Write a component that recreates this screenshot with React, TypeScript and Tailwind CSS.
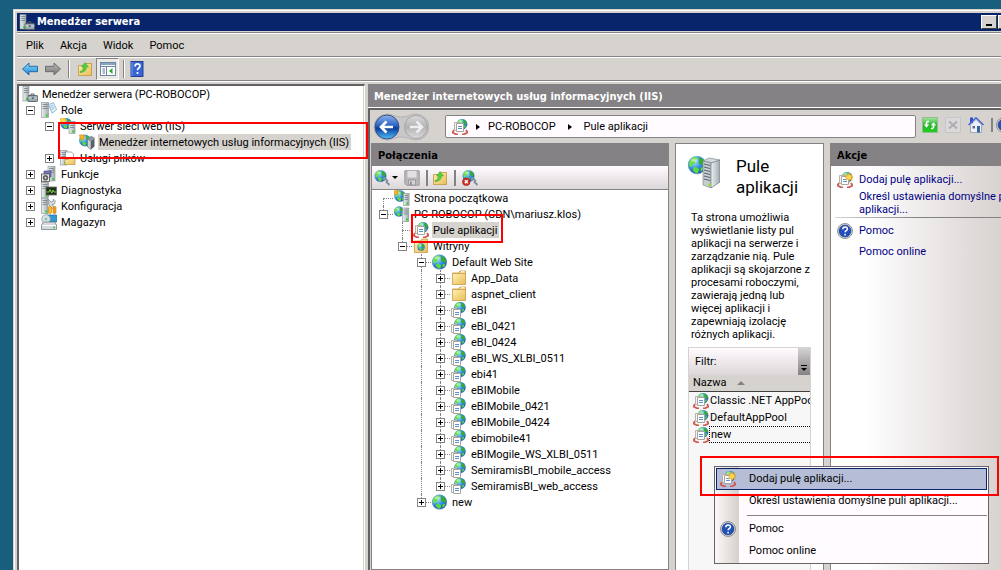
import type { ReactNode } from "react";
import clsx from "clsx";

/* ── Icon primitives (16x16 grid) ── */

function Svg({ children, className = "size-4" }: { children: ReactNode; className?: string }) {
  return (
    <svg viewBox="0 0 16 16" className={clsx("block shrink-0", className)} aria-hidden="true">
      {children}
    </svg>
  );
}

function Defs() {
  return (
    <svg className="absolute size-0" aria-hidden="true">
      <defs>
        <radialGradient id="sea" cx="0.35" cy="0.3" r="0.8">
          <stop offset="0" stopColor="#b4e8fb" />
          <stop offset="0.45" stopColor="#3d97e6" />
          <stop offset="1" stopColor="#1748a4" />
        </radialGradient>
        <linearGradient id="metal" x1="0" x2="1" y1="0" y2="0">
          <stop offset="0" stopColor="#eef1f2" />
          <stop offset="1" stopColor="#a2abb0" />
        </linearGradient>
        <linearGradient id="folder" x1="0" x2="1" y1="0" y2="1">
          <stop offset="0" stopColor="#fff0b4" />
          <stop offset="1" stopColor="#e8bd58" />
        </linearGradient>
        <linearGradient id="blueArrow" x1="0" x2="0" y1="0" y2="1">
          <stop offset="0" stopColor="#8fdcfa" />
          <stop offset="1" stopColor="#1c86d4" />
        </linearGradient>
        <linearGradient id="grayArrow" x1="0" x2="0" y1="0" y2="1">
          <stop offset="0" stopColor="#b8b8b8" />
          <stop offset="1" stopColor="#777777" />
        </linearGradient>
        <linearGradient id="blueBall" x1="0" x2="0" y1="0" y2="1">
          <stop offset="0" stopColor="#8cb4ee" />
          <stop offset="0.45" stopColor="#2a60c0" />
          <stop offset="0.55" stopColor="#0c3c9c" />
          <stop offset="1" stopColor="#4fc0fa" />
        </linearGradient>
        <linearGradient id="grayBall" x1="0" x2="0" y1="0" y2="1">
          <stop offset="0" stopColor="#d9d9d9" />
          <stop offset="0.5" stopColor="#b4b4b4" />
          <stop offset="1" stopColor="#dadada" />
        </linearGradient>
        <linearGradient id="green" x1="0" x2="0" y1="0" y2="1">
          <stop offset="0" stopColor="#a5e8a0" />
          <stop offset="0.5" stopColor="#28b428" />
          <stop offset="1" stopColor="#19d319" />
        </linearGradient>
      </defs>
    </svg>
  );
}

function Globe({ x = 8, y = 8, r = 7 }: { x?: number; y?: number; r?: number }) {
  return (
    <g transform={`translate(${x} ${y}) scale(${r / 7})`}>
      <circle r="7.3" fill="url(#sea)" stroke="#4a86c8" strokeWidth="0.4" />
      <path d="M-6.4-2.5C-5-5.6-2.2-7-.6-6.8L.6-5l-2 1.6-.4 2.2-2 .9-.8 2.1-1.8-.8z" fill="#6be044" />
      <path d="M2-6.3c2.4.8 4 2.5 4.6 4.8L5.6.8 3.6-.6 1.4-1.2l.3-2.2z" fill="#35ae2a" />
      <path d="M-3.4 2.2l2.6-.6 2.6 1.8-1 3-1.4.4-2.4-1.7zM3.2 2.2l2.6-.8-1 3-1.9 1.2z" fill="#5cda3a" />
      <ellipse cx="-2.2" cy="-4" rx="2.6" ry="1.4" fill="#fff" opacity="0.45" />
    </g>
  );
}

function Tower({ x = 1, y = 0, w = 7, h = 15 }: { x?: number; y?: number; w?: number; h?: number }) {
  return (
    <g>
      <rect x={x} y={y + 0.5} width={w} height={h - 0.5} fill="url(#metal)" stroke="#868f95" strokeWidth="0.6" />
      <path d={`M${x + 1} ${y + 2.5}h${w - 2}M${x + 1} ${y + 4.5}h${w - 2}M${x + 1} ${y + 6.5}h${w - 2}`} stroke="#6a747b" strokeWidth="0.7" />
      <rect x={x + w - 2.8} y={y + h - 3} width="2" height="2" fill="#2ed321" />
    </g>
  );
}

function Pages({ x = 1, y = 6 }: { x?: number; y?: number }) {
  return (
    <g transform={`translate(${x} ${y})`}>
      <path d="M.5.5h5v8h-5z" fill="#f6f4f0" stroke="#b8b4ac" />
      <path d="M2.5 1.5h7v8h-7z" fill="#fff" stroke="#a8a49c" />
      <path d="M4 4.5h4M4 6.5h4" stroke="#5a90d0" />
    </g>
  );
}

function Spark({ x = 4, y = 4 }: { x?: number; y?: number }) {
  return (
    <path
      transform={`translate(${x} ${y})`}
      d="M0-4l1 2.3L3.2-3l-1 2.2L4 0 2.2 1l1 2.2L1 2 0 4-1 2l-2.2 1.2 1-2.2L-4 0l1.8-.8-1-2.2L-1-1.7z"
      fill="#ffd54a"
      stroke="#f0a030"
      strokeWidth="0.6"
    />
  );
}

/* ── Icons ── */

const ServerManagerIcon = () => (
  <Svg>
    <Tower x={1} y={0} w={6} h={15} />
    <path d="M9 9.5V8h3v1.5" fill="none" stroke="#555f66" />
    <rect x="6" y="9.5" width="9.5" height="6" rx="0.6" fill="#9caab3" stroke="#4c565c" strokeWidth="0.8" />
    <path d="M6 12h9.5" stroke="#dce3e7" strokeWidth="0.8" />
    <path d="M9.8 11.3h2v1.5h-2z" fill="#4c565c" />
  </Svg>
);

const RolesIcon = () => (
  <Svg>
    <Tower x={0.5} w={7} h={15.5} />
    <path d="M7.5 2.5l5-1.8 3.2 7-4.6 3.5z" fill="#e3f3fc" stroke="#6d9fc3" strokeWidth="0.7" />
    <path d="M9 4.2l3-1.1M9.6 6l3.3-1.3M10.4 7.8l3.1-1.6" stroke="#77a9cc" strokeWidth="0.7" />
  </Svg>
);

const WebServerIcon = () => (
  <Svg>
    <Globe x={6} y={5.5} r={5.3} />
    <Spark x={2.8} y={2.6} />
    <Tower x={9} y={3} w={6} h={12.5} />
  </Svg>
);

const ServerNodeIcon = () => (
  <Svg>
    <Globe x={5} y={5.6} r={4.8} />
    <Tower x={8.5} y={1.5} w={6.3} h={14} />
  </Svg>
);

const HomeNodeIcon = () => (
  <Svg>
    <Globe x={6} y={6} r={5.4} />
    <path d="M0 1l4-1v3.5L1 5z" fill="#f5b72c" stroke="#d5880e" strokeWidth="0.6" />
    <Tower x={9.5} y={3} w={5.6} h={12.5} />
  </Svg>
);

const IisManagerIcon = () => (
  <Svg>
    <Globe x={6} y={6.5} r={5.5} />
    <path d="M.5 1h4.5v4l-3.5.6z" fill="#f7b42d" stroke="#da850e" strokeWidth="0.6" />
    <path d="M8.5 5l3.5 2v8.5L8.5 13z" fill="#ccd3d7" stroke="#606a70" strokeWidth="0.6" />
    <path d="M12 7l3.5-3.5v9L12 15.5z" fill="#596066" />
    <path d="M8.5 5L12 1.8l3.5 1.7L12 7z" fill="#8b959b" />
  </Svg>
);

const FileServicesIcon = () => (
  <Svg>
    <Tower x={0.5} w={6.5} h={15} />
    <path d="M5.5 2h6l2 2v6h-8z" fill="#fff" stroke="#788a98" strokeWidth="0.7" />
    <path d="M5 9.5h3.5l1-1.5h5.5v6.5H5z" fill="url(#folder)" stroke="#c2923a" strokeWidth="0.7" />
  </Svg>
);

const FeaturesIcon = () => (
  <Svg>
    <Tower x={7} y={0} w={7} h={15} />
    <path d="M3 5h7v6H3z" fill="#7476b8" stroke="#4d4f8c" strokeWidth="0.7" />
    <rect x="0.5" y="8" width="8" height="7.5" fill="#f2f2f2" stroke="#4b4b4b" strokeWidth="0.8" />
    <circle cx="4.5" cy="11.8" r="2.8" fill="#606060" />
    <circle cx="4.5" cy="11.8" r="1" fill="#e8e8e8" />
  </Svg>
);

const DiagnosticsIcon = () => (
  <Svg>
    <Tower x={0.5} w={7} h={15.5} />
    <rect x="5" y="5" width="10.5" height="8" fill="#20301c" stroke="#667066" strokeWidth="0.8" />
    <path d="M5.5 10h2.5l1-2.5 1.8 3.6L12 8l1 2h2" fill="none" stroke="#86dc4b" strokeWidth="0.9" />
  </Svg>
);

const ConfigurationIcon = () => (
  <Svg>
    <Tower x={0.5} w={6.5} h={15.5} />
    <path d="M7 1l3 3 2-.5.4-2.4 2 2-1 3-2.4.4 4 4.5-1.5 1.5L8 7z" fill="#d6dde1" stroke="#737f86" strokeWidth="0.7" />
    <rect x="7.5" y="8.5" width="3" height="7" rx="1" fill="#f7bd27" stroke="#ca8211" strokeWidth="0.6" />
    <rect x="12" y="8.5" width="3" height="7" rx="1" fill="#f09a1c" stroke="#ca8211" strokeWidth="0.6" />
  </Svg>
);

const StorageIcon = () => (
  <Svg>
    <path d="M6 1h9.5v7H6z" fill="#2f9cd0" stroke="#1f6c95" strokeWidth="0.7" />
    <circle cx="5" cy="5" r="4.3" fill="#dae1e5" stroke="#87939a" strokeWidth="0.7" />
    <circle cx="5" cy="5" r="1.3" fill="#79c4a5" />
    <path d="M2.5 8h11l2 3v4.500h-15V11z" fill="#d4dade" stroke="#69747b" strokeWidth="0.7" />
    <path d="M1 11.5h14" stroke="#fff" />
    <rect x="12" y="12.8" width="2" height="1.4" fill="#2ed321" />
  </Svg>
);

const SiteIcon = () => (
  <Svg>
    <Globe x={7.5} />
  </Svg>
);

const FolderIcon = () => (
  <Svg>
    <path d="M1.5 3h6l1.5-2h5.5v3H1.5z" fill="#f5d57e" stroke="#bd8f38" strokeWidth="0.7" />
    <path d="M10 1.8h3.5" stroke="#fff" />
    <path d="M1.5 3.5h13v11h-13z" fill="url(#folder)" stroke="#c79a45" strokeWidth="0.8" />
  </Svg>
);

const SitesFolderIcon = () => (
  <Svg>
    <path d="M1.5 3h6l1.5-2h5.5v3H1.5z" fill="#f5d57e" stroke="#bd8f38" strokeWidth="0.7" />
    <path d="M1.5 3.5h13v11h-13z" fill="url(#folder)" stroke="#c79a45" strokeWidth="0.8" />
    <Globe x={8} y={9} r={3.5} />
  </Svg>
);

const AppIcon = () => (
  <Svg>
    <Globe x={9} y={5.5} r={5.4} />
    <Pages x={0} y={6} />
  </Svg>
);

const PoolIcon = ({ fresh }: { fresh?: boolean }) => (
  <Svg>
    <Globe x={10} y={5.2} r={5} />
    <path d="M2 11L.5 13.500l3.500 1.800h2M14 11l1.500 2.500-3.500 1.800h-2" fill="none" stroke="#d0584e" strokeWidth="1.8" />
    <Pages x={2} y={3} />
    {fresh && <Spark x={12} y={5} />}
  </Svg>
);

const HelpBallIcon = () => (
  <Svg>
    <circle cx="8" cy="8" r="7.5" fill="#e2e2e2" stroke="#777" strokeWidth="0.8" />
    <circle cx="8" cy="8" r="6" fill="#2450bb" stroke="#173780" strokeWidth="0.6" />
    <path d="M5.8 6.3c0-3.1 4.6-3 4.6-.4 0 1.7-2.3 1.7-2.3 3.4M8.1 10.8v1.6" fill="none" stroke="#fff" strokeWidth="1.5" />
  </Svg>
);

const HelpBookIcon = () => (
  <Svg>
    <rect x="2" y="0.5" width="12" height="15" fill="#3666d4" stroke="#1b348c" strokeWidth="0.9" />
    <path d="M3 1v14" stroke="#789cf0" />
    <path d="M6 5.4c0-3.4 5-3.2 5-.4 0 2-2.5 2-2.5 4.2M8.5 11v2" fill="none" stroke="#fff" strokeWidth="1.7" />
  </Svg>
);

const ArrowIcon = ({ forward }: { forward?: boolean }) => (
  <Svg>
    <path
      d={forward ? "M15.5 8L9 2v3.3H.5v5.4H9V14z" : "M.5 8L7 2v3.3h8.5v5.4H7V14z"}
      fill={forward ? "url(#grayArrow)" : "url(#blueArrow)"}
      stroke={forward ? "#666" : "#1b62a5"}
      strokeWidth="0.9"
    />
  </Svg>
);

const FolderUpIcon = () => (
  <Svg>
    <path d="M1.5 4.5H8l1-2h5.5v12h-13z" fill="url(#folder)" stroke="#c2963f" strokeWidth="0.8" />
    <path d="M3 10.5c2.5-.5 3.5-2 3.2-4.5H4.5L8 1.5 11.5 6H9.3c.3 3.5-2.5 5.5-6.3 5.5z" fill="#56ce38" stroke="#3a9e2c" strokeWidth="0.5" />
  </Svg>
);

const PaneIcon = () => (
  <Svg>
    <rect x="0.5" y="1.5" width="15" height="13" fill="#fff" stroke="#7086a3" />
    <path d="M1 3h14" stroke="#8ba3c2" strokeWidth="2" />
    <path d="M1 5.5h14M6.5 5.5v9" stroke="#7086a3" />
    <path d="M2.5 8h2.5M2.5 10h2.5M2.5 12h2.5" stroke="#5473a8" />
    <path d="M12.5 7v6L9 10z" fill="#24a928" />
  </Svg>
);

const ConnectIcon = ({ remove }: { remove?: boolean }) => (
  <Svg>
    <Globe x={6.5} y={6} r={5.6} />
    <path d="M9 9.5l2.2-1 2 2.2-.6 1.6 3 2.6" fill="none" stroke="#7e91a4" strokeWidth="2" />
    {remove && (
      <g>
        <circle cx="4.3" cy="11.8" r="3.8" fill="#d52c25" stroke="#8d1713" strokeWidth="0.6" />
        <path d="M2.8 10.3l3 3m0-3l-3 3" stroke="#fff" strokeWidth="1.3" />
      </g>
    )}
  </Svg>
);

const SaveIcon = () => (
  <Svg>
    <path d="M.8.8h14.4v14.4H2.5L.8 13.5z" fill="#b8b6b8" stroke="#9c9a9c" />
    <path d="M3.5 1h9v6.5h-9z" fill="#e2e0e2" />
    <path d="M4.5 10h7v5h-7z" fill="#d7d5d7" stroke="#8c8a8c" strokeWidth="0.7" />
    <path d="M6 11.5h1.8V15H6z" fill="#8c8a8c" />
  </Svg>
);

const RefreshIcon = () => (
  <Svg>
    <rect x="0.5" y="0.5" width="15" height="15" fill="url(#green)" stroke="#97b997" />
    <path d="M7 4.5H5.5L4.5 5.5V8M9 11.5h1.5l1-1V8" fill="none" stroke="#fff" strokeWidth="1.6" />
    <path d="M1.8 7.5h5.4L4.5 10.8zM8.8 8.5h5.4L11.5 5.2z" fill="#fff" />
  </Svg>
);

const StopIcon = () => (
  <Svg>
    <rect x="0.5" y="0.5" width="15" height="15" fill="#dad8da" stroke="#c6c4c6" />
    <path d="M4 4.5l8 7m0-7l-8 7" stroke="#b0aeb0" strokeWidth="2.2" />
  </Svg>
);

const HouseIcon = () => (
  <Svg>
    <path d="M2 .5h3V6H2z" fill="#2f50c9" />
    <path d="M2.5 8L8 2.5 13.5 8v7.5h-11z" fill="#eef1f7" stroke="#8791a5" strokeWidth="0.7" />
    <path d="M.5 8L8 .8 15.5 8" fill="none" stroke="#4565d4" strokeWidth="1.5" />
    <path d="M9 9h3v6.5H9z" fill="#3665a5" />
    <path d="M4.5 9H7v2.5H4.5z" fill="#606a78" />
  </Svg>
);

function NavBalls() {
  return (
    <svg viewBox="0 0 56 28" className="block h-7 w-14" aria-hidden="true">
      <path d="M14 1c5 0 8 3 14.5 3S38 1 43 1a13 13 0 0 1 0 26c-5 0-8-3-14.5-3S19 27 14 27a13 13 0 0 1 0-26z" fill="#c9c7c9" stroke="#b5b3b5" />
      <circle cx="14" cy="14" r="12" fill="url(#blueBall)" stroke="#3a4f86" />
      <path d="M13.5 8.5L8 14l5.5 5.5M8.5 14H20" fill="none" stroke="#fff" strokeWidth="2.6" />
      <circle cx="43" cy="14" r="11.5" fill="url(#grayBall)" stroke="#a8a6a8" />
      <path d="M43.5 8.5L49 14l-5.5 5.5M48.5 14H37" fill="none" stroke="#eeeeee" strokeWidth="2.5" />
    </svg>
  );
}

function PoolHeaderIcon() {
  return (
    <svg viewBox="0 0 32 32" className="block size-8 shrink-0" aria-hidden="true">
      <Globe x={9} y={9} r={8.5} />
      <path d="M15 5l6-3 11 2-6 3z" fill="#d5dadd" stroke="#7f898f" strokeWidth="0.7" />
      <path d="M15 5l8 2v25l-8-3z" fill="#c8ced2" stroke="#7f898f" strokeWidth="0.7" />
      <path d="M23 7l9-3v22l-9 6z" fill="url(#metal)" stroke="#70797f" strokeWidth="0.7" />
      <path d="M16 8l6 1.5M16 11l6 1.5M16 14l6 1.5M16 17l6 1.5M16 20l6 1.5M16 23l6 1.5" stroke="#59636a" />
      <path d="M20 27.5h2.5V30H20z" fill="#9be22b" />
    </svg>
  );
}

/* ── Tree ── */

type Node = {
  label: string;
  icon: ReactNode;
  // one entry per indent column, true draws the dotted guide
  guides?: boolean[];
  expander?: "open" | "closed" | "line";
  guideUp?: boolean;
  guideDown?: boolean;
  selected?: boolean;
};

function TreeRow({ node, dotted }: { node: Node; dotted?: boolean }) {
  const { label, icon, guides = [], expander, guideUp, guideDown, selected } = node;
  return (
    <li className="flex h-4 items-center whitespace-nowrap">
      {guides.map((on, i) => (
        <span key={i} className="h-4 w-[19px] shrink-0 pl-[9px]">
          {on && <span className="block h-4 w-px border-l border-dotted border-[#848284]" />}
        </span>
      ))}
      {expander && (
        <span className="relative flex h-4 w-[19px] shrink-0 items-center justify-center">
          {dotted && (
            <>
              {guideUp && <span className="absolute top-0 left-[9px] h-2 border-l border-dotted border-[#848284]" />}
              {guideDown && <span className="absolute top-2 left-[9px] h-2 border-l border-dotted border-[#848284]" />}
              <span className="absolute top-2 right-0 left-[9px] border-t border-dotted border-[#848284]" />
            </>
          )}
          {expander !== "line" && (
            <button
              aria-label={expander === "open" ? `Zwiń ${label}` : `Rozwiń ${label}`}
              className="relative block size-[9px] border border-[#848284] bg-white"
            >
              <svg viewBox="0 0 7 7" className="block size-[7px]">
                <path d={expander === "open" ? "M1 3.5h5" : "M1 3.5h5M3.5 1v5"} stroke="#000" />
              </svg>
            </button>
          )}
        </span>
      )}
      <span className="w-[19px] shrink-0 pl-px">{icon}</span>
      <span className={clsx("ml-px h-4 px-px leading-[18px]", selected && "bg-[#d6d3ce] pr-0.5")}>{label}</span>
    </li>
  );
}

const serverTree: Node[] = [
  { label: "Menedżer serwera (PC-ROBOCOP)", icon: <ServerManagerIcon /> },
  { label: "Role", icon: <RolesIcon />, expander: "open" },
  { label: "Serwer sieci web (IIS)", icon: <WebServerIcon />, guides: [false], expander: "open" },
  {
    label: "Menedżer internetowych usług informacyjnych (IIS)",
    icon: <IisManagerIcon />,
    guides: [false, false],
    expander: "line",
    selected: true,
  },
  { label: "Usługi plików", icon: <FileServicesIcon />, guides: [false], expander: "closed" },
  { label: "Funkcje", icon: <FeaturesIcon />, expander: "closed" },
  { label: "Diagnostyka", icon: <DiagnosticsIcon />, expander: "closed" },
  { label: "Konfiguracja", icon: <ConfigurationIcon />, expander: "closed" },
  { label: "Magazyn", icon: <StorageIcon />, expander: "closed" },
];

const apps = [
  "eBI",
  "eBI_0421",
  "eBI_0424",
  "eBI_WS_XLBI_0511",
  "ebi41",
  "eBIMobile",
  "eBIMobile_0421",
  "eBIMobile_0424",
  "ebimobile41",
  "eBIMogile_WS_XLBI_0511",
  "SemiramisBI_mobile_access",
  "SemiramisBI_web_access",
];

const connectionTree: Node[] = [
  { label: "Strona początkowa", icon: <HomeNodeIcon />, expander: "line", guideDown: true },
  { label: "PC-ROBOCOP (CDN\\mariusz.klos)", icon: <ServerNodeIcon />, expander: "open", guideUp: true },
  { label: "Pule aplikacji", icon: <PoolIcon />, guides: [false], expander: "line", guideUp: true, guideDown: true, selected: true },
  { label: "Witryny", icon: <SitesFolderIcon />, guides: [false], expander: "open", guideUp: true },
  { label: "Default Web Site", icon: <SiteIcon />, guides: [false, false], expander: "open", guideUp: true, guideDown: true },
  ...["App_Data", "aspnet_client"].map((label): Node => ({
    label,
    icon: <FolderIcon />,
    guides: [false, false, true],
    expander: "closed",
    guideUp: true,
    guideDown: true,
  })),
  ...apps.map((label, i): Node => ({
    label,
    icon: <AppIcon />,
    guides: [false, false, true],
    expander: "closed",
    guideUp: true,
    guideDown: i < apps.length - 1,
  })),
  { label: "new", icon: <SiteIcon />, guides: [false, false], expander: "closed", guideUp: true },
];

const pools = ["Classic .NET AppPool", "DefaultAppPool", "new"];

/* ── Panels ── */

function PaneTitle({ children }: { children: ReactNode }) {
  return (
    <h2 className="h-[22px] shrink-0 bg-[#848284] px-1.5 font-['DejaVu_Sans_Condensed','Noto_Sans',sans-serif] font-bold leading-[23px] text-black">
      {children}
    </h2>
  );
}

function Connections() {
  return (
    <section className="flex w-[298px] shrink-0 flex-col border border-[#848284] bg-white">
      <PaneTitle>Połączenia</PaneTitle>
      <div className="flex h-6 shrink-0 items-center border-b border-[#848284] bg-linear-to-b from-[#fffbff] to-[#dcd7d8] pl-0.5">
        <button aria-label="Połącz" className="flex items-center gap-0.5">
          <ConnectIcon />
          <span className="border-x-[3px] border-t-[3px] border-x-transparent border-t-black" />
        </button>
        <button aria-label="Zapisz" className="ml-1.5">
          <SaveIcon />
        </button>
        <span className="mr-1 ml-1.5 h-4 w-0.5 bg-[#848284]" />
        <button aria-label="W górę">
          <FolderUpIcon />
        </button>
        <span className="mx-1.5 h-4 w-0.5 bg-[#848284]" />
        <button aria-label="Usuń połączenie">
          <ConnectIcon remove />
        </button>
      </div>
      <ul className="pl-0.5">
        {connectionTree.map((node, i) => (
          <TreeRow key={i} node={node} dotted />
        ))}
      </ul>
    </section>
  );
}

function PoolsPane() {
  return (
    <section className="flex min-w-0 flex-1 flex-col border border-b-0 border-[#848284] bg-white pl-3">
      <div className="flex gap-4 pt-3">
        <PoolHeaderIcon />
        <h1 className="text-[17px] leading-[21px]">Pule aplikacji</h1>
      </div>
      <p className="mt-[13px] mr-3 ml-[3px] leading-[13px]">
        Ta strona umożliwia
        <br />
        wyświetlanie listy pul
        <br />
        aplikacji na serwerze i<br />
        zarządzanie nią. Pule
        <br />
        aplikacji są skojarzone z<br />
        procesami roboczymi,
        <br />
        zawierają jedną lub
        <br />
        więcej aplikacji i<br />
        zapewniają izolację
        <br />
        różnych aplikacji.
      </p>
      <div className="mt-1.5 mr-3 min-h-0 flex-1 overflow-hidden border border-b-0 border-[#d6d3ce] bg-[#f7f7f7]">
        <div className="flex h-[27px] items-center justify-between bg-linear-to-b from-[#fffbff] to-[#dcd7d8] pl-1.5">
          <span>Filtr:</span>
          <button aria-label="Opcje filtru" className="flex h-full w-3 flex-col items-center justify-end gap-0.5 bg-linear-to-b from-[#d6d3d6] to-[#848284] pb-1">
            <span className="h-px w-1.5 bg-black" />
            <span className="border-x-[3px] border-t-[3px] border-x-transparent border-t-black" />
          </button>
        </div>
        <table className="w-full table-fixed border-collapse">
          <thead>
            <tr>
              <th className="h-4 border-b border-[#424142] bg-[#d6d3ce] p-0 pl-1 text-left font-normal">
                <span className="flex h-4 items-center gap-2.5">
                  Nazwa
                  <span className="border-x-4 border-b-4 border-x-transparent border-b-[#848284]" />
                </span>
              </th>
            </tr>
          </thead>
          <tbody>
            {pools.map((pool) => (
              <tr key={pool}>
                <td className="h-[17px] p-0">
                  <span className="flex h-[17px] items-center whitespace-nowrap">
                    <span className="ml-1">
                      <PoolIcon />
                    </span>
                    <span
                      className={clsx(
                        "h-[17px] flex-1 pl-px",
                        pool === "new" && "border-y border-l border-dotted border-black pl-0 leading-4",
                      )}
                    >
                      {pool}
                    </span>
                  </span>
                </td>
              </tr>
            ))}
          </tbody>
        </table>
      </div>
    </section>
  );
}

function Actions() {
  return (
    <section className="w-[171px] shrink-0 overflow-hidden border-t border-l border-[#848284] bg-linear-to-r from-white from-20% to-[#d8d2d0]">
      <PaneTitle>Akcje</PaneTitle>
      <nav className="pt-1.5 text-[#000084]">
        <a href="#dodaj" className="flex h-4 items-center gap-1.5 pl-1.5 whitespace-nowrap">
          <PoolIcon fresh />
          Dodaj pulę aplikacji...
        </a>
        <a href="#ustawienia" className="mt-0.5 block pl-7 leading-[13px] whitespace-nowrap">
          Określ ustawienia domyślne puli
          <br />
          aplikacji...
        </a>
        <hr className="mt-px ml-1 h-px border-0 bg-linear-to-r from-[#d6d3ce] via-[#848284] to-[#848284]" />
        <a href="#pomoc" className="mt-[5px] flex h-4 items-center gap-1.5 pl-1.5">
          <HelpBallIcon />
          Pomoc
        </a>
        <a href="#online" className="mt-1 block h-4 pl-7">
          Pomoc online
        </a>
      </nav>
    </section>
  );
}

function MenuItem({ label, icon, active }: { label: string; icon?: ReactNode; active?: boolean }) {
  return (
    <button
      role="menuitem"
      className={clsx(
        "flex h-[22px] w-full items-center border pl-[3px] text-left whitespace-nowrap",
        active ? "border-[#08246b] bg-[#b5bed6]" : "border-transparent",
      )}
    >
      <span className="w-[29px] shrink-0">{icon}</span>
      {label}
    </button>
  );
}

function ContextMenu() {
  return (
    <div
      role="menu"
      className="absolute top-[466px] left-[714px] w-[275px] border border-[#666466] bg-[linear-gradient(to_right,#fbf8f7,#d6d0cb_24px,#fffbff_24px)] p-px"
    >
      <MenuItem label="Dodaj pulę aplikacji..." icon={<PoolIcon fresh />} active />
      <MenuItem label="Określ ustawienia domyślne puli aplikacji..." />
      <hr className="mt-[3px] mb-0.5 ml-[31px] h-px border-0 bg-[#848284]" />
      <MenuItem label="Pomoc" icon={<HelpBallIcon />} />
      <MenuItem label="Pomoc online" />
    </div>
  );
}

function TitleButton({ label, children }: { label: string; children: ReactNode }) {
  return (
    <button
      aria-label={label}
      className="flex h-3.5 w-4 shrink-0 items-end border border-t-white border-r-[#424142] border-b-[#424142] border-l-white bg-[#d6d3ce] p-0.5"
    >
      {children}
    </button>
  );
}

export default function App() {
  return (
    <div className="relative flex h-screen overflow-hidden bg-[#195f7d] pt-[9px] pl-[13px] font-[Roboto,'Liberation_Sans',sans-serif] text-[11px] leading-[18px] text-black">
      <Defs />
      <div className="flex min-w-0 flex-1 flex-col border-t border-l border-[#d6d3ce] bg-[#d6d3ce]">
        <div className="flex min-h-0 flex-1 flex-col border-t border-l border-white pt-0.5 pl-0.5">
          {/* Title bar */}
          <header className="flex h-[18px] shrink-0 items-center bg-[#08246b] pl-0.5 text-white">
            <ServerManagerIcon />
            <span className="flex-1 pl-0.5 font-['DejaVu_Sans_Condensed','Noto_Sans',sans-serif] font-bold">Menedżer serwera</span>
            <div className="flex w-5 shrink-0 gap-px">
              <TitleButton label="Minimalizuj">
                <span className="ml-0.5 h-0.5 w-1.5 bg-black" />
              </TitleButton>
              <TitleButton label="Maksymalizuj">
                <span className="size-2.5 border border-t-2 border-black" />
              </TitleButton>
            </div>
          </header>

          {/* Menu */}
          <div className="mt-px flex h-[25px] shrink-0 items-center gap-4 border-y border-t-[#848284] border-b-[#848284] pt-0.5 pl-[9px] shadow-[inset_0_1px_#fff]">
            <button>Plik</button>
            <button>Akcja</button>
            <button>Widok</button>
            <button>Pomoc</button>
          </div>

          {/* Toolbar */}
          <div className="flex h-6 shrink-0 items-center border-t border-b border-t-white border-b-[#848284] pl-[5px]">
            <button aria-label="Wstecz">
              <ArrowIcon />
            </button>
            <button aria-label="Dalej" className="ml-[7px]">
              <ArrowIcon forward />
            </button>
            <span className="mx-[7px] h-[18px] w-0.5 border-r border-r-white bg-[#848284]" />
            <button aria-label="W górę">
              <FolderUpIcon />
            </button>
            <button
              aria-label="Pokaż drzewo konsoli"
              className="ml-[3px] flex h-[22px] w-[23px] items-center justify-center border border-t-[#848284] border-r-white border-b-white border-l-[#848284] bg-[#ebe9e6]"
            >
              <PaneIcon />
            </button>
            <span className="mx-1 h-[18px] w-0.5 border-r border-r-white bg-[#848284]" />
            <button aria-label="Pomoc">
              <HelpBookIcon />
            </button>
          </div>

          {/* Panes */}
          <div className="flex min-h-0 flex-1 gap-[3px] border-t border-white pt-0.5">
            <nav className="w-[348px] shrink-0 border-t-2 border-r border-l-2 border-t-[#636163] border-r-white border-l-[#636163] bg-white">
              <div className="h-full border-r border-[#d6d3ce] pl-0.5">
                <ul>
                  {serverTree.map((node) => (
                    <TreeRow key={node.label} node={node} />
                  ))}
                </ul>
              </div>
            </nav>

            <main className="flex min-w-0 flex-1 flex-col">
              <div className="h-6 shrink-0 border-b border-white bg-[#848284] pl-1.5 font-['DejaVu_Sans_Condensed','Noto_Sans',sans-serif] font-bold leading-[25px] text-white">
                Menedżer internetowych usług informacyjnych (IIS)
              </div>
              <div className="flex min-h-0 flex-1 flex-col border-t-2 border-l-2 border-[#636163] pl-px">
                <div className="flex h-[33px] shrink-0 items-center">
                  <button aria-label="Wstecz lub dalej" className="ml-0.5">
                    <NavBalls />
                  </button>
                  <div className="ml-4 flex h-[23px] min-w-0 flex-1 items-center rounded-xs border border-[#848284] bg-[#fffbff] pl-1.5">
                    <PoolIcon />
                    <span className="mx-2 border-y-[3px] border-l-4 border-y-transparent border-l-black" />
                    <button>PC-ROBOCOP</button>
                    <span className="mx-3 border-y-[3px] border-l-4 border-y-transparent border-l-black" />
                    <button>Pule aplikacji</button>
                  </div>
                  <div className="ml-1.5 flex w-[79px] shrink-0 items-center gap-[7px] pb-1">
                    <button aria-label="Odśwież">
                      <RefreshIcon />
                    </button>
                    <button aria-label="Zatrzymaj">
                      <StopIcon />
                    </button>
                    <button aria-label="Strona główna">
                      <HouseIcon />
                    </button>
                    <span className="-mr-1 h-3.5 w-0.5 shrink-0 bg-[#848284]" />
                    <button aria-label="Pomoc">
                      <HelpBallIcon />
                    </button>
                  </div>
                </div>
                <div className="flex min-h-0 flex-1 gap-1.5">
                  <Connections />
                  <PoolsPane />
                  <Actions />
                </div>
              </div>
            </main>
          </div>
        </div>
      </div>

      <ContextMenu />

      {/* Highlight frames */}
      <div className="pointer-events-none absolute top-[122px] left-[58px] h-[37px] w-[310px] border-2 border-[#ff0000]" />
      <div className="pointer-events-none absolute top-[214px] left-[411px] h-[29px] w-[92px] border-2 border-[#ff0000]" />
      <div className="pointer-events-none absolute top-[456px] left-[700px] h-10 w-[299px] border-2 border-[#ff0000]" />
    </div>
  );
}
